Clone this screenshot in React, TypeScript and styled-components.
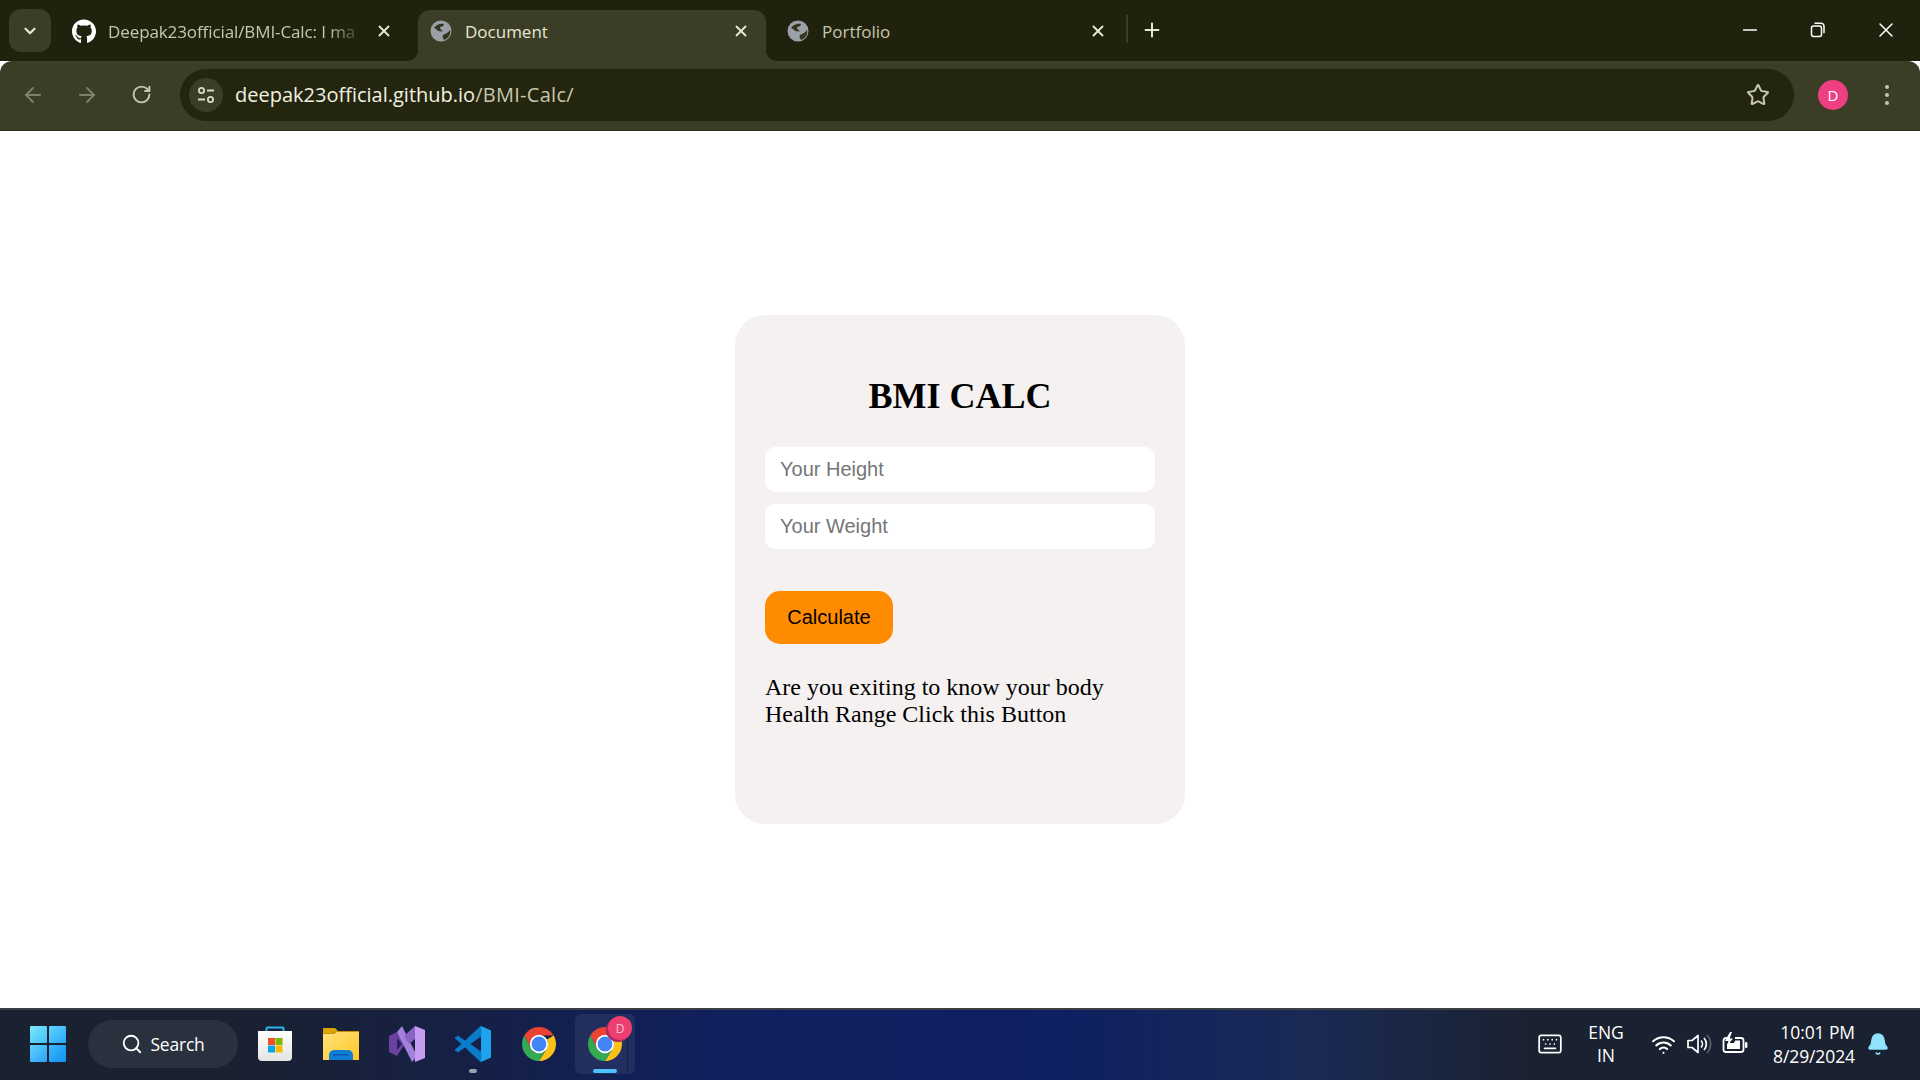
import React from "react";
import styled, { createGlobalStyle } from "styled-components";
import { FaGithub } from "react-icons/fa";
import {
  ArrowLeft,
  ArrowRight,
  Bell,
  ChevronDown,
  Keyboard,
  Minus,
  Plus,
  RotateCw,
  Search,
  Star,
  Wifi,
  X,
} from "lucide-react";

const GlobalStyle = createGlobalStyle`
  html, body { margin: 0; padding: 0; height: 100%; }
  body { overflow: hidden; background: #fff; }
  * { box-sizing: border-box; }
`;

const Screen = styled.div`
  width: 1920px;
  height: 1080px;
  display: flex;
  flex-direction: column;
  font-family: "Open Sans", "Noto Sans", sans-serif;
`;

/* ---- tab strip ---- */
const TabStrip = styled.div`
  height: 61px;
  flex-shrink: 0;
  background: #20220e;
  display: flex;
  align-items: flex-end;
  padding-left: 9px;
`;

const TabMenu = styled.div`
  width: 42px;
  height: 43px;
  margin-bottom: 9px;
  margin-right: 7px;
  border-radius: 12px;
  background: #3b3d27;
  color: #e6e7d3;
  display: flex;
  align-items: center;
  justify-content: center;
`;

const Tab = styled.div<{ $active?: boolean; $width: number; $left: number; $right: number }>`
  position: relative;
  width: ${(p) => p.$width}px;
  height: 51px;
  padding: 0 ${(p) => p.$right}px 9px ${(p) => p.$left}px;
  display: flex;
  align-items: center;
  border-radius: 12px 12px 0 0;
  background: ${(p) => (p.$active ? "#3b3d27" : "transparent")};
  color: ${(p) => (p.$active ? "#e6e7d3" : "#c5c7ac")};
  font-size: 17px;

  ${(p) =>
    p.$active &&
    `
    &::before, &::after {
      content: "";
      position: absolute;
      bottom: 0;
      width: 12px;
      height: 12px;
    }
    &::before {
      left: -12px;
      background: radial-gradient(circle at 0 0, transparent 12px, #3b3d27 12.5px);
    }
    &::after {
      right: -12px;
      background: radial-gradient(circle at 100% 0, transparent 12px, #3b3d27 12.5px);
    }
  `}
`;

const TabIcon = styled.span`
  width: 24px;
  height: 24px;
  flex-shrink: 0;
  margin-right: 12px;
  display: flex;
  align-items: center;
  justify-content: center;
  color: #fff;
`;

const TabTitle = styled.span<{ $fade?: boolean }>`
  flex: 1;
  min-width: 0;
  white-space: nowrap;
  ${(p) =>
    p.$fade &&
    `
    letter-spacing: -0.1px;
    -webkit-mask-image: linear-gradient(90deg, #000 86%, transparent 100%);
    mask-image: linear-gradient(90deg, #000 86%, transparent 100%);
  `}
`;

const TabClose = styled.span`
  width: 24px;
  display: flex;
  justify-content: center;
  color: #e6e7d3;
  margin-left: 8px;
`;

const TabDivider = styled.div`
  width: 2px;
  height: 28px;
  margin: 0 0 18px 2px;
  background: #3b3d27;
`;

const NewTab = styled.div`
  width: 48px;
  height: 51px;
  padding-bottom: 11px;
  display: flex;
  align-items: center;
  justify-content: center;
  color: #e6e7d3;
`;

const WindowControls = styled.div`
  margin-left: auto;
  height: 100%;
  display: flex;
  align-items: center;
  padding-bottom: 2px;
  color: #fff;
`;

const WindowButton = styled.div`
  width: 68px;
  display: flex;
  justify-content: center;
`;

/* ---- toolbar ---- */
const Toolbar = styled.div`
  height: 70px;
  flex-shrink: 0;
  background: #3b3d27;
  border-radius: 12px 12px 0 0;
  display: flex;
  align-items: center;
  padding: 0 0 2px 20px;
  border-bottom: 1px solid #2f3120;
`;

const NavButton = styled.div<{ $dim?: boolean }>`
  width: 26px;
  margin-right: 28px;
  display: flex;
  justify-content: center;
  color: ${(p) => (p.$dim ? "#7d7f68" : "#c5c7ac")};
`;

const Omnibox = styled.div`
  width: 1614px;
  height: 52px;
  margin-left: -2px;
  padding: 0 24px 0 9px;
  border-radius: 26px;
  background: #24250f;
  display: flex;
  align-items: center;
`;

const SiteChip = styled.div`
  width: 34px;
  height: 34px;
  border-radius: 50%;
  background: #3b3d27;
  color: #d8dac2;
  margin-right: 12px;
  display: flex;
  align-items: center;
  justify-content: center;
`;

const Url = styled.div`
  flex: 1;
  font-size: 20px;
  letter-spacing: 0.28px;
  color: #c5c7ac;
  white-space: nowrap;

  b {
    font-weight: 400;
    letter-spacing: 0;
    color: #f1f2e2;
  }
`;

const Avatar = styled.div`
  width: 30px;
  height: 30px;
  margin-left: 24px;
  border-radius: 50%;
  background: #ee3f82;
  color: #fff;
  font-size: 15px;
  display: flex;
  align-items: center;
  justify-content: center;
`;

const MenuDots = styled.div`
  width: 30px;
  margin-left: 24px;
  display: flex;
  flex-direction: column;
  align-items: center;
  gap: 4px;

  i {
    width: 4px;
    height: 4px;
    border-radius: 50%;
    background: #c5c7ac;
  }
`;

/* ---- page ---- */
const Page = styled.main`
  flex: 1;
  background: #fff;
  display: flex;
  align-items: center;
  justify-content: center;
`;

const Card = styled.div`
  width: 450px;
  height: 509px;
  padding: 60px 30px 0;
  background: #f5f1f1;
  border-radius: 30px;
  font-family: "Liberation Serif", "Times New Roman", serif;
  color: #000;
`;

const Title = styled.h1`
  margin: 0 0 30px;
  font-size: 36px;
  line-height: 42px;
  font-weight: 700;
  text-align: center;
`;

const Field = styled.input`
  display: block;
  width: 100%;
  height: 45px;
  margin-bottom: 12px;
  padding: 0 15px;
  border: none;
  outline: none;
  border-radius: 10px;
  background: #fff;
  font-family: "Liberation Sans", Arial, sans-serif;
  font-size: 20px;

  &::placeholder {
    color: #757575;
    opacity: 1;
  }
`;

const CalcButton = styled.button`
  display: block;
  width: 128px;
  height: 53px;
  margin-top: 42px;
  padding: 0;
  border: none;
  border-radius: 15px;
  background: #ff8c00;
  color: #000;
  font-family: "Liberation Sans", Arial, sans-serif;
  font-size: 20px;
  text-align: center;
`;

const Message = styled.p`
  margin: 30px 0 0;
  font-size: 24px;
  line-height: 27px;
`;

/* ---- taskbar ---- */
const Taskbar = styled.footer`
  height: 72px;
  flex-shrink: 0;
  border-top: 2px solid #3c3f44;
  padding-bottom: 2px;
  background: linear-gradient(90deg, #1a2130 0%, #1a2130 12%, #101f5e 38%, #0e1f62 55%, #1a2a55 68%, #1a2130 80%, #1a2130 100%);
  display: flex;
  align-items: center;
  color: #fff;
`;

const StartButton = styled.div`
  width: 36px;
  height: 36px;
  margin-left: 30px;
  display: grid;
  grid-template-columns: 1fr 1fr;
  grid-template-rows: 1fr 1fr;
  gap: 2px;
`;

const StartTile = styled.i<{ $from: string; $to: string }>`
  background: linear-gradient(135deg, ${(p) => p.$from}, ${(p) => p.$to});
  border-radius: 1px;
`;

const SearchPill = styled.div`
  width: 150px;
  height: 48px;
  margin-left: 22px;
  margin-right: 7px;
  border-radius: 24px;
  background: #2a303d;
  display: flex;
  align-items: center;
  justify-content: center;
  gap: 7px;
  font-size: 17.5px;
  letter-spacing: -0.2px;
`;

const AppSlot = styled.div<{ $active?: boolean }>`
  position: relative;
  width: 60px;
  height: 60px;
  margin-right: 6px;
  display: flex;
  align-items: center;
  justify-content: center;
  border-radius: 6px;
  background: ${(p) => (p.$active ? "rgba(255,255,255,0.07)" : "transparent")};

  ${(p) =>
    p.$active &&
    `
    &::after {
      content: "";
      position: absolute;
      top: 2px;
      bottom: 2px;
      right: 7px;
      width: 1px;
      background: rgba(0,0,0,0.25);
    }
  `}
`;

const RunningDot = styled.span<{ $active?: boolean }>`
  position: absolute;
  bottom: 1px;
  left: 50%;
  transform: translateX(-50%);
  width: ${(p) => (p.$active ? 24 : 8)}px;
  height: 4px;
  border-radius: 2px;
  background: ${(p) => (p.$active ? "#4cc2ff" : "#9aa0aa")};
`;

const Badge = styled.span`
  position: absolute;
  top: 2px;
  right: 3px;
  width: 24px;
  height: 24px;
  border-radius: 50%;
  background: #ee3f72;
  box-shadow: -2px 2px 0 #a82a5a;
  color: #f7c5d5;
  font-size: 12px;
  display: flex;
  align-items: center;
  justify-content: center;
  z-index: 1;
`;

const Tray = styled.div`
  margin-left: auto;
  display: flex;
  align-items: center;
  font-size: 17.5px;
  letter-spacing: -0.1px;
`;

const TrayIcon = styled.span<{ $gap: number }>`
  display: flex;
  margin-right: ${(p) => p.$gap}px;
`;

const Lang = styled.div`
  width: 52px;
  margin-right: 19px;
  text-align: center;
  line-height: 23px;
`;

const Clock = styled.div`
  text-align: right;
  line-height: 24px;
  margin-right: 11px;
`;

const BellWrap = styled.span`
  display: flex;
  margin-right: 30px;
  color: #8fe3ff;
`;

/* ---- drawn icons ---- */
function GlobeIcon() {
  return (
    <svg width="22" height="22" viewBox="0 0 22 22">
      <circle cx="11" cy="11" r="10.5" fill="#9aa0a6" />
      <path d="M4 8c2-3 6-5 10-4 0 2-2 3-4 3 0 2 1 3 3 4-2 1-5 0-6-1-1-1-2-2-3-2z" fill="#33351f" />
      <path d="M20 10c1 4-1 8-6 10-1-2-2-3-1-5 2-1 5-2 7-5z" fill="#33351f" />
    </svg>
  );
}

function TuneIcon() {
  return (
    <svg width="20" height="20" viewBox="0 0 20 20" fill="none" stroke="currentColor" strokeWidth="1.8">
      <circle cx="5.5" cy="5.5" r="2.6" />
      <path d="M11 5.5h7M2 14.5h7" />
      <circle cx="14.5" cy="14.5" r="2.6" />
    </svg>
  );
}

function RestoreIcon() {
  return (
    <svg width="16" height="16" viewBox="0 0 16 16" fill="none" stroke="currentColor" strokeWidth="1.5">
      <rect x="1.5" y="4" width="10" height="10.5" rx="2" />
      <path d="M4.5 1.2h6.5a3 3 0 0 1 3 3v7" />
    </svg>
  );
}

function StoreIcon() {
  return (
    <svg width="36" height="36" viewBox="0 0 36 36">
      <defs>
        <linearGradient id="bag" x1="0" y1="0" x2="0" y2="1">
          <stop offset="0" stopColor="#ffffff" />
          <stop offset="1" stopColor="#e4e4e4" />
        </linearGradient>
      </defs>
      <path d="M9.5 6V2.5a1 1 0 0 1 1-1h15a1 1 0 0 1 1 1V6" fill="none" stroke="#2bb5f0" strokeWidth="2" />
      <path d="M1 5h34v26a4 4 0 0 1-4 4H5a4 4 0 0 1-4-4z" fill="url(#bag)" />
      <rect x="11" y="12" width="7" height="7" fill="#f25022" />
      <rect x="18.5" y="12" width="7" height="7" fill="#7fba00" />
      <rect x="11" y="19.5" width="7" height="7" fill="#00a4ef" />
      <rect x="18.5" y="19.5" width="7" height="7" fill="#ffb900" />
    </svg>
  );
}

function FolderIcon() {
  return (
    <svg width="36" height="34" viewBox="0 0 36 34">
      <defs>
        <linearGradient id="folder" x1="0" y1="0" x2="1" y2="1">
          <stop offset="0" stopColor="#ffe27a" />
          <stop offset="1" stopColor="#ffc727" />
        </linearGradient>
      </defs>
      <path d="M0 2a1 1 0 0 1 1-1h11l4 4h20v3H0z" fill="#dca600" />
      <path d="M0 6h10l3-2h23v29H0z" fill="#c99400" />
      <path d="M0 7h11l3-2h22v28H0z" fill="url(#folder)" />
      <path d="M6 33v-5a5 5 0 0 1 5-5h14a5 5 0 0 1 5 5v5z" fill="#0f7fd6" />
      <rect x="10" y="27" width="16" height="1.6" fill="#0a5da8" />
    </svg>
  );
}

function VisualStudioIcon() {
  return (
    <svg width="36" height="38" viewBox="0 0 36 38">
      <path d="M0 11l8-4 8 12-8 12-8-4z" fill="#68429e" />
      <path d="M8 13v12l5-6z" fill="#2a2060" />
      <path d="M8 7l5-6 15 30-5 6z" fill="#a57fdc" />
      <path d="M26 1l10 4v28l-10 4z" fill="#c79bf2" />
      <path d="M26 1v13l-6 5-5-8z" fill="#8a63c9" />
    </svg>
  );
}

function VsCodeIcon() {
  return (
    <svg width="36" height="38" viewBox="0 0 36 38">
      <path d="M26 1l10 4.5v27L26 37z" fill="#1fa5f0" />
      <path d="M26 1L10 16 3 11l-3 2 7 6-7 6 3 2 7-5 16 15V27L15 19 26 11z" fill="#0a7cc9" strokeLinejoin="round" stroke="#0a7cc9" strokeWidth="0.8" />
    </svg>
  );
}

function ChromeIcon() {
  return (
    <svg width="36" height="36" viewBox="0 0 36 36">
      <path d="M3.3 9.5A17 17 0 0 1 32.7 9.5H18a9 9 0 0 0-7.8 13z" fill="#ea4335" />
      <path d="M32.7 9.5A17 17 0 0 1 18 35l7.8-12.5a9 9 0 0 0 0-9z" fill="#fbc116" />
      <path d="M18 35A17 17 0 0 1 3.3 9.5l6.9 13a9 9 0 0 0 15.6 0z" fill="#34a853" />
      <circle cx="18" cy="18" r="9.2" fill="#fff" />
      <circle cx="18" cy="18" r="7.4" fill="#4285f4" />
    </svg>
  );
}

function SpeakerIcon() {
  return (
    <svg width="26" height="24" viewBox="0 0 26 24" fill="none" stroke="#fff" strokeWidth="1.7">
      <path d="M2 8.5h4l6-5v17l-6-5H2z" strokeLinejoin="round" />
      <path d="M15 8.5a5 5 0 0 1 0 7M18 6a9 9 0 0 1 0 12" />
      <path d="M21 3a13 13 0 0 1 0 18" stroke="#5a5e68" />
    </svg>
  );
}

function BatteryIcon() {
  return (
    <svg width="26" height="24" viewBox="0 0 26 24">
      <path d="M8 6H4a2.5 2.5 0 0 0-2.5 2.5v9A2.5 2.5 0 0 0 4 20h15a2.5 2.5 0 0 0 2.5-2.5v-9A2.5 2.5 0 0 0 19 6h-6" fill="none" stroke="#fff" strokeWidth="1.8" />
      <path d="M5 17v-5l3-2v1h4l1-2.5H18v8.5z" fill="#fff" />
      <path d="M8 0L3 9h3.5L5 14l6-7.5H7.5L10 0z" fill="#fff" />
      <rect x="23" y="10" width="2.4" height="6" rx="1" fill="#fff" />
    </svg>
  );
}

function App() {
  return (
    <Screen>
      <GlobalStyle />
      <TabStrip>
        <TabMenu>
          <ChevronDown size={18} strokeWidth={3} />
        </TabMenu>
        <Tab $width={360} $left={14} $right={22}>
          <TabIcon>
            <FaGithub size={25} />
          </TabIcon>
          <TabTitle $fade>Deepak23official/BMI-Calc: I ma</TabTitle>
          <TabClose>
            <X size={18} strokeWidth={2.5} />
          </TabClose>
        </Tab>
        <Tab $active $width={348} $left={11} $right={13}>
          <TabIcon>
            <GlobeIcon />
          </TabIcon>
          <TabTitle>Document</TabTitle>
          <TabClose>
            <X size={18} strokeWidth={2.5} />
          </TabClose>
        </Tab>
        <Tab $width={358} $left={20} $right={14}>
          <TabIcon>
            <GlobeIcon />
          </TabIcon>
          <TabTitle>Portfolio</TabTitle>
          <TabClose>
            <X size={18} strokeWidth={2.5} />
          </TabClose>
        </Tab>
        <TabDivider />
        <NewTab>
          <Plus size={22} strokeWidth={2.2} />
        </NewTab>
        <WindowControls>
          <WindowButton>
            <Minus size={22} strokeWidth={1.6} />
          </WindowButton>
          <WindowButton>
            <RestoreIcon />
          </WindowButton>
          <WindowButton>
            <X size={24} strokeWidth={1.5} />
          </WindowButton>
        </WindowControls>
      </TabStrip>

      <Toolbar>
        <NavButton $dim>
          <ArrowLeft size={24} strokeWidth={2} />
        </NavButton>
        <NavButton $dim>
          <ArrowRight size={24} strokeWidth={2} />
        </NavButton>
        <NavButton>
          <RotateCw size={21} strokeWidth={2.2} />
        </NavButton>
        <Omnibox>
          <SiteChip>
            <TuneIcon />
          </SiteChip>
          <Url>
            <b>deepak23official.github.io</b>/BMI-Calc/
          </Url>
          <Star size={24} strokeWidth={2} color="#c5c7ac" />
        </Omnibox>
        <Avatar>D</Avatar>
        <MenuDots>
          <i />
          <i />
          <i />
        </MenuDots>
      </Toolbar>

      <Page>
        <Card>
          <Title>BMI CALC</Title>
          <Field placeholder="Your Height" />
          <Field placeholder="Your Weight" />
          <CalcButton>Calculate</CalcButton>
          <Message>Are you exiting to know your body Health Range Click this Button</Message>
        </Card>
      </Page>

      <Taskbar>
        <StartButton>
          <StartTile $from="#7fe9fd" $to="#3fc0fa" />
          <StartTile $from="#5fd4fc" $to="#2aa8f8" />
          <StartTile $from="#5fd0fb" $to="#2aa4f8" />
          <StartTile $from="#3cb8fa" $to="#1090f5" />
        </StartButton>
        <SearchPill>
          <Search size={22} strokeWidth={2} />
          Search
        </SearchPill>
        <AppSlot>
          <StoreIcon />
        </AppSlot>
        <AppSlot>
          <FolderIcon />
        </AppSlot>
        <AppSlot>
          <VisualStudioIcon />
        </AppSlot>
        <AppSlot>
          <VsCodeIcon />
          <RunningDot />
        </AppSlot>
        <AppSlot>
          <ChromeIcon />
        </AppSlot>
        <AppSlot $active>
          <ChromeIcon />
          <Badge>D</Badge>
          <RunningDot $active />
        </AppSlot>
        <Tray>
          <TrayIcon $gap={17}>
            <Keyboard size={26} strokeWidth={1.6} />
          </TrayIcon>
          <Lang>
            ENG
            <br />
            IN
          </Lang>
          <TrayIcon $gap={10}>
            <Wifi size={25} strokeWidth={2} />
          </TrayIcon>
          <TrayIcon $gap={10}>
            <SpeakerIcon />
          </TrayIcon>
          <TrayIcon $gap={25}>
            <BatteryIcon />
          </TrayIcon>
          <Clock>
            10:01 PM
            <br />
            8/29/2024
          </Clock>
          <BellWrap>
            <Bell size={24} fill="#8fe3ff" strokeWidth={1.5} />
          </BellWrap>
        </Tray>
      </Taskbar>
    </Screen>
  );
}

export default App;
